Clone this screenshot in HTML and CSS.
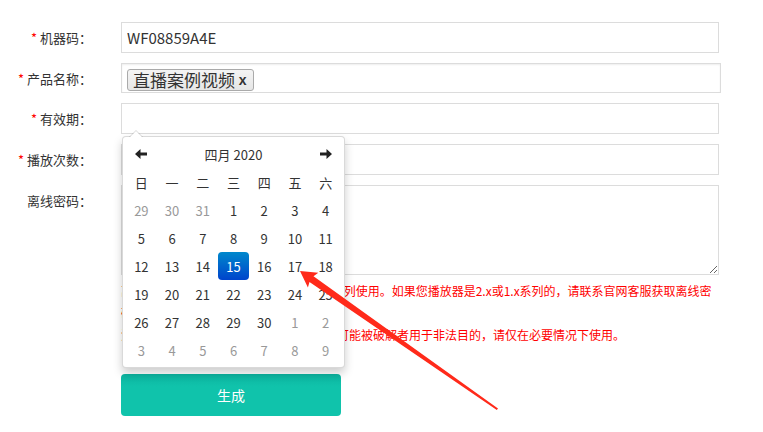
FILE: index.html
```html
<!DOCTYPE html>
<html lang="zh-CN">
<head>
    <meta charset="UTF-8">
    <meta name="viewport" content="width=device-width, initial-scale=1.0">
    <title>生成离线密码</title>
    <link rel="stylesheet" href="styles.css">
</head>
<body>
    <div class="form">
        <div class="row">
            <label class="label"><span class="req">*</span> 机器码：</label>
            <div class="field">
                <input type="text" class="input" value="WF08859A4E">
            </div>
        </div>
        <div class="row">
            <label class="label"><span class="req">*</span> 产品名称：</label>
            <div class="field">
                <div class="choices">
                    <span class="choice">直播案例视频 <b class="choice-remove">x</b></span>
                </div>
            </div>
        </div>
        <div class="row">
            <label class="label"><span class="req">*</span> 有效期：</label>
            <div class="field date-field">
                <input type="text" class="input">
                <div class="datepicker">
                    <div class="dp-grid">
                        <span class="dp-nav"><svg width="12" height="10" viewBox="0 0 12 10"><path d="M0 5 L5.5 0 V3.5 H12 V6.5 H5.5 V10 Z" fill="#222"/></svg></span>
                        <span class="dp-title">四月 2020</span>
                        <span class="dp-nav"><svg width="12" height="10" viewBox="0 0 12 10"><path d="M12 5 L6.5 0 V3.5 H0 V6.5 H6.5 V10 Z" fill="#222"/></svg></span>

                        <span class="dow">日</span><span class="dow">一</span><span class="dow">二</span><span class="dow">三</span><span class="dow">四</span><span class="dow">五</span><span class="dow">六</span>

                        <span class="day old">29</span><span class="day old">30</span><span class="day old">31</span><span class="day">1</span><span class="day">2</span><span class="day">3</span><span class="day">4</span>
                        <span class="day">5</span><span class="day">6</span><span class="day">7</span><span class="day">8</span><span class="day">9</span><span class="day">10</span><span class="day">11</span>
                        <span class="day">12</span><span class="day">13</span><span class="day">14</span><span class="day active">15</span><span class="day">16</span><span class="day">17</span><span class="day">18</span>
                        <span class="day">19</span><span class="day">20</span><span class="day">21</span><span class="day">22</span><span class="day">23</span><span class="day">24</span><span class="day">25</span>
                        <span class="day">26</span><span class="day">27</span><span class="day">28</span><span class="day">29</span><span class="day">30</span><span class="day new">1</span><span class="day new">2</span>
                        <span class="day new">3</span><span class="day new">4</span><span class="day new">5</span><span class="day new">6</span><span class="day new">7</span><span class="day new">8</span><span class="day new">9</span>
                    </div>
                </div>
            </div>
        </div>
        <div class="row">
            <label class="label"><span class="req">*</span> 播放次数：</label>
            <div class="field">
                <input type="text" class="input">
            </div>
        </div>
        <div class="row row-top">
            <label class="label">离线密码：</label>
            <div class="field">
                <textarea class="textarea"></textarea>
                <div class="tips">
                    <p>离线密码仅适用于播放器3.x 及以上版本系列使用。如果您播放器是2.x或1.x系列的，请联系官网客服获取离线密码。</p>
                    <p>注意：离线密码无需联网验证，一旦泄露可能被破解者用于非法目的，请仅在必要情况下使用。</p>
                </div>
                <button class="btn-submit">生成</button>
            </div>
        </div>
    </div>

    <svg class="annotation" width="763" height="432" viewBox="0 0 763 432">
        <polygon points="300,271 318.3,272.8 313.5,276.2 498,408.5 496.8,410.1 309.5,281.9 307.9,287.6" fill="#ff2a1a"/>
    </svg>
</body>
</html>
```

FILE: styles.css
```css
body {
    margin: 0;
    padding: 0;
    background-color: #fff;
    font-family: "Noto Sans CJK SC", "Microsoft YaHei", sans-serif;
    color: #333;
}

.form {
    padding-top: 22px;
    width: 763px;
}

.row {
    display: flex;
    align-items: center;
    margin-bottom: 10px;
}

.row-top {
    align-items: flex-start;
}

.label {
    width: 92px;
    text-align: right;
    font-size: 13px;
    line-height: 19px;
    color: #333;
    flex-shrink: 0;
}

.row-top .label {
    padding-top: 6px;
}

.req {
    color: #f00;
}

.field {
    margin-left: 29px;
    width: 598px;
}

.input {
    box-sizing: border-box;
    width: 598px;
    height: 31px;
    border: 1px solid #dcdcdc;
    padding: 0 5px;
    font-family: inherit;
    font-size: 15px;
    color: #333;
    outline: none;
    display: block;
}

.choices {
    box-sizing: border-box;
    width: 600px;
    height: 30px;
    border: 1px solid #dcdcdc;
    box-shadow: inset 0 1px 2px #eee;
    padding: 4px 5px;
}

.choice {
    display: inline-flex;
    align-items: center;
    height: 22px;
    box-sizing: border-box;
    padding: 0 6px 0 5px;
    border: 1px solid #aaa;
    border-radius: 3px;
    background: linear-gradient(#f4f4f4, #e6e6e6);
    font-size: 17px;
    line-height: 20px;
    color: #333;
    white-space: pre;
}

.choice-remove {
    font-size: 14px;
    font-family: "Liberation Sans", Arial, sans-serif;
    color: #333;
}

.date-field {
    position: relative;
}

.datepicker {
    position: absolute;
    top: 33px;
    left: 1px;
    width: 223px;
    box-sizing: border-box;
    padding: 3px;
    background: #fff;
    border: 1px solid rgba(0, 0, 0, 0.15);
    border-radius: 4px;
    box-shadow: 0 5px 10px rgba(0, 0, 0, 0.2);
    z-index: 10;
}

.datepicker:before {
    content: '';
    position: absolute;
    top: -7px;
    left: 6px;
    border-left: 7px solid transparent;
    border-right: 7px solid transparent;
    border-bottom: 7px solid rgba(0, 0, 0, 0.15);
}

.datepicker:after {
    content: '';
    position: absolute;
    top: -6px;
    left: 7px;
    border-left: 6px solid transparent;
    border-right: 6px solid transparent;
    border-bottom: 6px solid #fff;
}

.dp-grid {
    display: grid;
    grid-template-columns: repeat(7, 1fr);
    grid-auto-rows: 28px;
    font-size: 13px;
    color: #333;
}

.dp-grid span {
    display: flex;
    align-items: center;
    justify-content: center;
}

.dp-title {
    grid-column: span 5;
}

.day.old,
.day.new {
    color: #999;
}

.day.active {
    color: #fff;
    background: linear-gradient(#0088cc, #0044cc);
    border-radius: 4px;
}

.textarea {
    display: block;
    box-sizing: border-box;
    width: 598px;
    height: 90px;
    border: 1px solid #dcdcdc;
    font-family: inherit;
    outline: none;
    margin: 0;
}

.tips {
    margin-top: 5px;
    font-size: 12px;
    line-height: 22px;
    color: #f00;
}

.tips p {
    margin: 0;
}

.btn-submit {
    display: block;
    margin-top: 28px;
    width: 220px;
    height: 42px;
    border: none;
    border-radius: 4px;
    background: linear-gradient(#0db4a0, #10c3ab 30%);
    color: #fff;
    font-family: inherit;
    font-size: 14px;
    cursor: pointer;
}

.annotation {
    position: absolute;
    top: 0;
    left: 0;
    pointer-events: none;
    z-index: 20;
}
```
